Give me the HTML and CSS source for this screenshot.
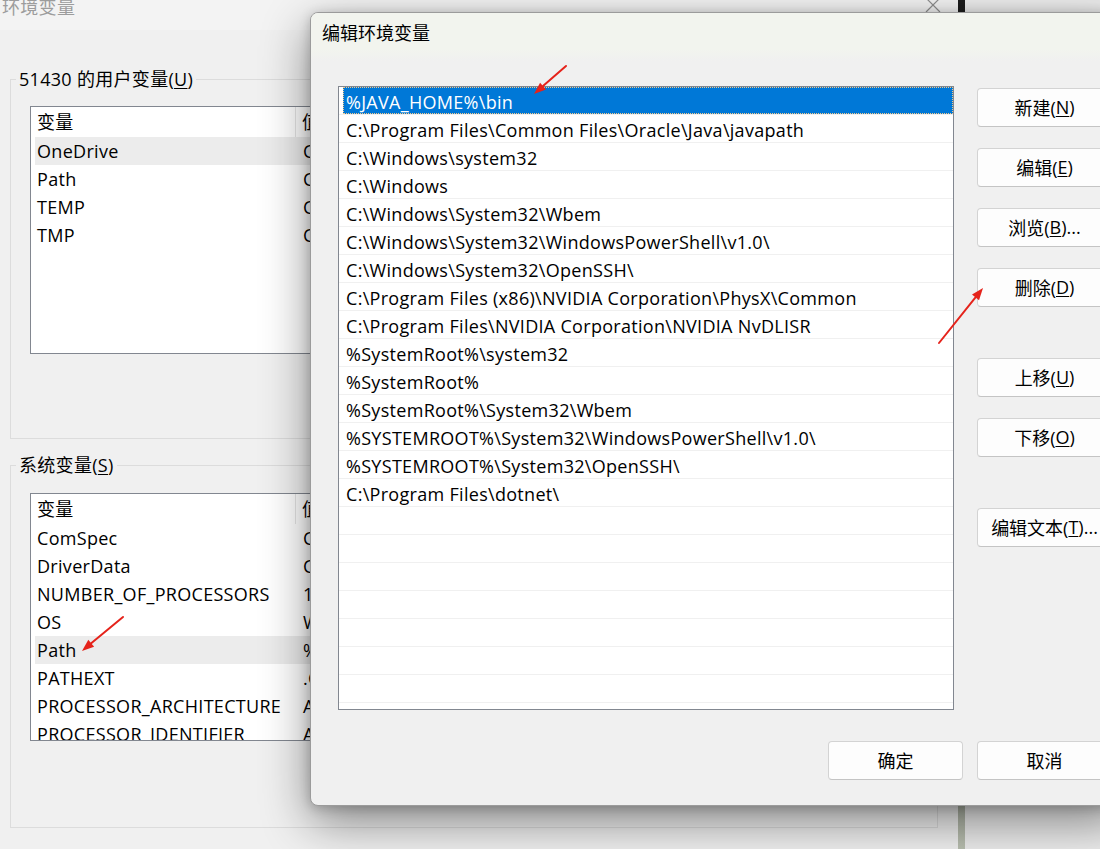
FILE: index.html
```html
<!DOCTYPE html>
<html lang="zh-CN">
<head>
<meta charset="utf-8">
<title>编辑环境变量</title>
<link rel="stylesheet" href="styles.css">
</head>
<body>
<div class="screen">
  <div class="bgwin">
    <div class="bg-title">
      <span class="bg-title-text">环境变量</span>
      <svg class="bg-close" viewBox="0 0 16 16"><path d="M1 1 L15 15 M15 1 L1 15" stroke="#8f8f8f" stroke-width="1.2" fill="none"/></svg>
    </div>
    <div class="bg-body">
      <fieldset class="group">
        <legend>51430 的用户变量(<u>U</u>)</legend>
        <div class="lv">
          <div class="lv-head"><div class="c1">变量</div><div class="c2">值</div></div>
          <div class="lv-row hl"><div class="c1">OneDrive</div><div class="c2">C:\Users\51430\OneDrive</div></div>
          <div class="lv-row"><div class="c1">Path</div><div class="c2">C:\Users\51430\AppData\Local\Microsoft\WindowsApps;</div></div>
          <div class="lv-row"><div class="c1">TEMP</div><div class="c2">C:\Users\51430\AppData\Local\Temp</div></div>
          <div class="lv-row"><div class="c1">TMP</div><div class="c2">C:\Users\51430\AppData\Local\Temp</div></div>
        </div>
      </fieldset>
      <fieldset class="group group2">
        <legend>系统变量(<u>S</u>)</legend>
        <div class="lv lv2">
          <div class="lv-head"><div class="c1">变量</div><div class="c2">值</div></div>
          <div class="lv-row"><div class="c1">ComSpec</div><div class="c2">C:\Windows\system32\cmd.exe</div></div>
          <div class="lv-row"><div class="c1">DriverData</div><div class="c2">C:\Windows\System32\Drivers\DriverData</div></div>
          <div class="lv-row"><div class="c1">NUMBER_OF_PROCESSORS</div><div class="c2">16</div></div>
          <div class="lv-row"><div class="c1">OS</div><div class="c2">Windows_NT</div></div>
          <div class="lv-row hl"><div class="c1">Path</div><div class="c2">%JAVA_HOME%\bin;C:\Program Files\Common Files</div></div>
          <div class="lv-row"><div class="c1">PATHEXT</div><div class="c2">.COM;.EXE;.BAT;.CMD;.VBS;.VBE;.JS;.JSE</div></div>
          <div class="lv-row"><div class="c1">PROCESSOR_ARCHITECTURE</div><div class="c2">AMD64</div></div>
          <div class="lv-row"><div class="c1">PROCESSOR_IDENTIFIER</div><div class="c2">AMD64 Family 25 Model 80</div></div>
        </div>
      </fieldset>
    </div>
  </div>
  <div class="bg-edge"></div>
  <div class="right-area"></div>

  <div class="dialog">
    <div class="dlg-title">编辑环境变量</div>
    <div class="dlg-main">
      <div class="pathlist">
        <div class="prow sel"><span>%JAVA_HOME%\bin</span></div>
        <div class="prow"><span>C:\Program Files\Common Files\Oracle\Java\javapath</span></div>
        <div class="prow"><span>C:\Windows\system32</span></div>
        <div class="prow"><span>C:\Windows</span></div>
        <div class="prow"><span>C:\Windows\System32\Wbem</span></div>
        <div class="prow"><span>C:\Windows\System32\WindowsPowerShell\v1.0\</span></div>
        <div class="prow"><span>C:\Windows\System32\OpenSSH\</span></div>
        <div class="prow"><span>C:\Program Files (x86)\NVIDIA Corporation\PhysX\Common</span></div>
        <div class="prow"><span>C:\Program Files\NVIDIA Corporation\NVIDIA NvDLISR</span></div>
        <div class="prow"><span>%SystemRoot%\system32</span></div>
        <div class="prow"><span>%SystemRoot%</span></div>
        <div class="prow"><span>%SystemRoot%\System32\Wbem</span></div>
        <div class="prow"><span>%SYSTEMROOT%\System32\WindowsPowerShell\v1.0\</span></div>
        <div class="prow"><span>%SYSTEMROOT%\System32\OpenSSH\</span></div>
        <div class="prow"><span>C:\Program Files\dotnet\</span></div>
        <div class="prow"><span></span></div>
        <div class="prow"><span></span></div>
        <div class="prow"><span></span></div>
        <div class="prow"><span></span></div>
        <div class="prow"><span></span></div>
        <div class="prow"><span></span></div>
        <div class="prow"><span></span></div>
        <div class="prow"><span></span></div>
      </div>
      <div class="btncol">
        <button class="btn">新建(<u>N</u>)</button>
        <button class="btn">编辑(<u>E</u>)</button>
        <button class="btn">浏览(<u>B</u>)...</button>
        <button class="btn">删除(<u>D</u>)</button>
        <button class="btn gap-lg">上移(<u>U</u>)</button>
        <button class="btn">下移(<u>O</u>)</button>
        <button class="btn gap-lg">编辑文本(<u>T</u>)...</button>
      </div>
    </div>
    <div class="dlg-foot">
      <button class="btn">确定</button>
      <button class="btn">取消</button>
    </div>
  </div>

  <svg class="arrows" viewBox="0 0 1100 849" width="1100" height="849">
    <g stroke="#e5231b" stroke-width="2" fill="none" stroke-linecap="round">
      <line x1="566" y1="66" x2="543" y2="86.1"/>
      <line x1="939" y1="343" x2="975.5" y2="297.4"/>
      <line x1="123" y1="617" x2="91.2" y2="643.3"/>
    </g>
    <g fill="#e5231b">
      <polygon points="534,94 546,89.5 540.1,82.7"/>
      <polygon points="983,288 979,300.2 972,294.6"/>
      <polygon points="82,651 94.1,646.8 88.3,639.8"/>
    </g>
  </svg>
</div>
</body>
</html>
```

FILE: styles.css
```css
* { box-sizing: border-box; }
html, body { margin: 0; padding: 0; }
body {
  width: 1100px;
  height: 849px;
  overflow: hidden;
  font-family: "Open Sans", "Noto Sans CJK SC", sans-serif;
  font-size: 18px;
  letter-spacing: 0.3px;
  color: #000;
}
u { text-decoration: underline; text-underline-offset: 2px; }

.screen {
  position: relative;
  width: 1100px;
  height: 849px;
  display: flex;
  overflow: hidden;
  background: #e9e9e9;
}

/* background window */
.bgwin {
  width: 958px;
  flex: none;
  background: #f0f0f0;
}
.bg-title {
  height: 30px;
  display: flex;
  justify-content: space-between;
  align-items: flex-start;
  padding-left: 2px;
  background: #f3f3f3;
}
.bg-title-text {
  line-height: 14px;
  color: #9c9c9c;
}
.bg-close {
  width: 16px;
  height: 16px;
  margin: -3px 17px 0 0;
}
.bg-body {
  padding: 38px 20px 0 10px;
}
.group {
  margin: 0;
  padding: 0;
  border: 1px solid #dcdcdc;
  height: 371px;
}
.group2 {
  margin-top: 15px;
  height: 374px;
}
.group legend {
  padding: 0 3px;
  margin-left: 5px;
  line-height: 22px;
}
.lv {
  margin: 16px 0 0 19px;
  width: 890px;
  height: 248px;
  border: 1px solid #828790;
  background: #fff;
  overflow: hidden;
}
.lv2 { margin-top: 17px; }
.lv-head {
  display: flex;
  height: 30px;
  line-height: 30px;
}
.lv-head .c1 {
  width: 265px;
  padding-left: 6px;
  border-right: 1px solid #e5e5e5;
}
.lv-head .c2 { padding-left: 6px; }
.lv-row {
  display: flex;
  height: 28px;
  line-height: 28px;
  margin-left: 4px;
  white-space: nowrap;
}
.lv-row .c1 { width: 261px; flex: none; padding-left: 2px; }
.lv-row .c2 { padding-left: 7px; }
.lv-row.hl { background: #ececec; }

.bg-edge {
  width: 7px;
  flex: none;
  background: linear-gradient(#1c1c1c 0, #2a2a2a 40%, #b9bfb0 100%);
}
.right-area {
  flex: 1;
  background: #ececec;
}

/* dialog */
.dialog {
  position: absolute;
  left: 310px;
  top: 12px;
  width: 815px;
  height: 794px;
  border: 1px solid #9b9b9b;
  border-radius: 8px;
  background: #f0f0f0;
  overflow: hidden;
  display: flex;
  flex-direction: column;
  box-shadow: 0 16px 48px rgba(0, 0, 0, 0.45), 0 2px 12px rgba(0, 0, 0, 0.2);
}
.dlg-title {
  height: 48px;
  flex: none;
  padding: 8px 0 0 11px;
  line-height: 24px;
  letter-spacing: 0;
  background: linear-gradient(#f2f4ee 0, #f2f4ee 75%, #f0f0f0 100%);
}
.dlg-main {
  display: flex;
  gap: 23px;
  padding: 25px 0 0 27px;
}
.pathlist {
  width: 616px;
  height: 624px;
  flex: none;
  border: 1px solid #828790;
  background: #fff;
  overflow: hidden;
}
.prow {
  height: 28px;
  border-bottom: 1px solid #f0f0f0;
  padding-left: 4px;
  white-space: nowrap;
}
.prow span {
  display: block;
  height: 100%;
  padding: 3px 0 0 3px;
  line-height: 24px;
}
.prow.sel span {
  background: #0078d7;
  color: #fff;
  outline: 1px dotted #f3c98b;
  outline-offset: -1px;
}
.btncol {
  display: flex;
  flex-direction: column;
  gap: 21px;
  padding-top: 2px;
}
.btn {
  width: 135px;
  height: 39px;
  flex: none;
  padding: 0 0 2px;
  border: 1px solid #d3d3d3;
  border-bottom-color: #c4c4c4;
  border-radius: 4px;
  background: #fdfdfd;
  font: inherit;
  letter-spacing: 0;
  color: #000;
  display: flex;
  align-items: center;
  justify-content: center;
}
.btncol .gap-lg { margin-top: 30px; }
.dlg-foot {
  display: flex;
  justify-content: flex-end;
  gap: 14px;
  padding: 31px 12px 0 0;
}

.arrows {
  position: absolute;
  left: 0;
  top: 0;
  pointer-events: none;
}
```
